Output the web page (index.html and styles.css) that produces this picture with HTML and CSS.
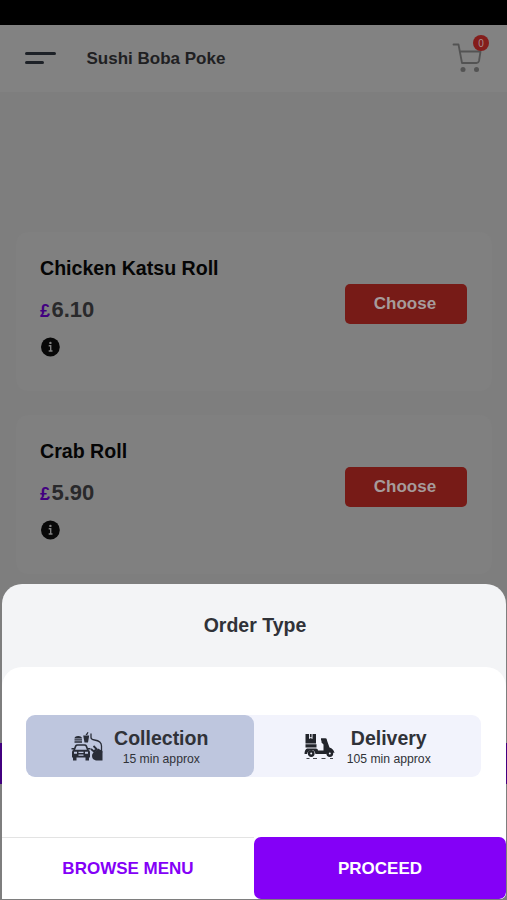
FILE: index.html
```html
<!DOCTYPE html>
<html lang="en">
<head>
<meta charset="utf-8">
<title>Sushi Boba Poke</title>
<link rel="stylesheet" href="styles.css">
</head>
<body>
<div class="phone">
  <div class="status"></div>
  <header class="header">
    <div class="burger"><span></span><span></span></div>
    <h1 class="brand">Sushi Boba Poke</h1>
    <div class="cart">
      <svg width="31" height="31" viewBox="0 0 31 31" fill="none" stroke="#535353" stroke-width="1.8" stroke-linecap="round" stroke-linejoin="round"><path d="M1.500 1.500H6.500L10 20H24.500Q26.500 20 27 18L28.500 8.500H8"/><g fill="#535353" stroke="none"><circle cx="11" cy="26.500" r="2.500"/><circle cx="24.500" cy="26.500" r="2.500"/></g></svg>
      <span class="badge">0</span>
    </div>
  </header>
  <main class="menu">
    <article class="card">
      <div>
        <h2 class="name">Chicken Katsu Roll</h2>
        <p class="price"><span>£</span>6.10</p>
        <svg class="info" width="20" height="20" viewBox="0 0 20 20"><circle cx="10.400" cy="10" r="9.400" fill="#080808"/><path d="M8.700 8.700h2v5M8.700 14h3.800" fill="none" stroke="#808080" stroke-width="1.400"/><circle cx="10.400" cy="5.900" r="1.200" fill="#808080"/></svg>
      </div>
      <button class="choose">Choose</button>
    </article>
    <article class="card">
      <div>
        <h2 class="name">Crab Roll</h2>
        <p class="price"><span>£</span>5.90</p>
        <svg class="info" width="20" height="20" viewBox="0 0 20 20"><circle cx="10.400" cy="10" r="9.400" fill="#080808"/><path d="M8.700 8.700h2v5M8.700 14h3.800" fill="none" stroke="#808080" stroke-width="1.400"/><circle cx="10.400" cy="5.900" r="1.200" fill="#808080"/></svg>
      </div>
      <button class="choose">Choose</button>
    </article>
  </main>
  <div class="basket"></div>
  <section class="sheet">
    <h2 class="title">Order Type</h2>
    <div class="panel">
      <div class="types">
        <div class="type selected">
          <svg width="32" height="32" viewBox="0 0 32 32" fill="#292d38"><path d="M3.500 7.500Q3.500 5 7.200 5T11 7.500ZM3.500 8.200h7.500v1.400H3.500zM3.500 10.300h7.500v1.500H3.500zM12.200 4.500h6l-1.200 7h-3.500zM14.500 4 16.500 1l1 .6-1.300 2.400z"/><path d="M20 2.500V6.500Q20 8.500 23.500 9 30.500 10 30.500 15V22" fill="none" stroke="#292d38" stroke-width="1.300"/><path d="M3 19.500 4.800 14.800Q5.200 14 6.500 14H13.500Q14.800 14 15.200 14.800L17 19.500" fill="none" stroke="#292d38" stroke-width="1.700"/><path fill-rule="evenodd" d="M3 18.700H17Q19 19 19 21V26.500H18V29.500H14.500V26.500H5.500V29.500H2V26.500H1V21Q1 19 3 18.700ZM3 20.700v2h3v-2zM14 20.700v2h3v-2zM7.500 20.700v1.300h5v-1.300zM7.500 23.500v1.300h5v-1.300z"/><path d="M0.500 17h2.500v1.500H.5zM17 17h2.500v1.500H17z"/><path d="M20 18 23 20.500 25.500 18 22.500 15" fill="none" stroke="#292d38" stroke-width="1.800" stroke-linejoin="round"/><path d="M24 20.500 27 17.500 31.500 20V29.500H25Q21 28.500 21 25 21 22 24 20.500Z"/></svg>
          <div class="label"><strong>Collection</strong><small>15 min approx</small></div>
        </div>
        <div class="type">
          <svg width="32" height="32" viewBox="0 0 32 32" fill="#22242b"><path d="M1.500 3H5V8L6.700 7 8.500 8V3H12V12.500H1.500zM5.900 3h1.700v3.200H5.900zM1.500 13.300H12.500V16.500H1.500z"/><path d="M3 17.500H12Q14 17.500 14 19.500H19.500V13.500L17.500 11.500V9.500H17V7.300H21.500Q23 7.300 23 9.500L25.500 16.500Q29.500 17.500 30.500 22L28.500 21.500Q25.500 18 22.500 23H11.500Q10.500 18.500 7 19 3.800 19.500 3 23H.500Q.500 18.500 3 17.500Z"/><g fill="none" stroke="#22242b" stroke-width="2.400"><circle cx="7.200" cy="22.500" r="2.200"/><circle cx="25.800" cy="22.500" r="2.200"/></g><path d="M2.500 27.500h3M9 27.500h4M17.500 27.500h4M26 27.500h3" fill="none" stroke="#44464d" stroke-width="1"/></svg>
          <div class="label"><strong>Delivery</strong><small>105 min approx</small></div>
        </div>
      </div>
    </div>
    <footer class="actions">
      <button class="browse">BROWSE MENU</button>
      <button class="proceed">PROCEED</button>
    </footer>
  </section>
</div>
</body>
</html>
```

FILE: styles.css
```css
* { box-sizing: border-box; }
body { margin: 0; font-family: "Liberation Sans", Arial, sans-serif; color: #303238; }
h1, h2, p { margin: 0; }
button { border: 0; padding: 0; font: inherit; }
svg { display: block; }
.phone { position: relative; width: 507px; height: 900px; overflow: hidden; background: #7e7e7e; }
.status { height: 25px; background: #000; }
.header { height: 67px; display: flex; align-items: center; padding: 0 19px 0 25px; background: #828282; }
.burger { width: 61.5px; display: grid; gap: 6px; position: relative; top: -1px; }
.burger span { width: 31px; height: 3px; border-radius: 2px; background: #1d2127; }
.burger span + span { width: 19px; }
.brand { flex: 1; font-size: 17px; line-height: 22px; color: #202022; }
.cart { position: relative; width: 36px; height: 31px; }
.badge { position: absolute; left: 21px; top: -8px; width: 16px; height: 16px; border-radius: 50%; background: #841d1b; color: #a68e8e; font-size: 10px; line-height: 17px; text-align: center; }
.menu { display: grid; gap: 24px; padding: 140px 15px 0 16px; }
.card { height: 159px; display: flex; justify-content: space-between; padding: 24px 25.5px 0 24px; border-radius: 12px; background: #808080; }
.name { font-size: 19.6px; line-height: 24px; color: #050505; }
.price { margin-top: 17px; font-size: 22px; line-height: 26px; font-weight: bold; color: #29292b; }
.price span { font-size: 18px; color: #420080; margin-right: 1.5px; }
.info { margin-top: 13px; }
.choose { width: 122px; height: 39.5px; margin-top: 28px; padding: 1px 1px 0 0; border-radius: 5px; background: #771b17; color: #a69b9b; font-size: 17px; font-weight: bold; }
.basket { position: absolute; left: 0; top: 743px; width: 507px; height: 41px; background: #42007f; }
.sheet { position: absolute; left: 2px; top: 584px; width: 504px; height: 315px; display: flex; flex-direction: column; border-radius: 20px 20px 6px 0; background: #f3f4f6; overflow: hidden; }
.title { height: 83px; line-height: 82px; text-align: center; font-size: 19.5px; padding-left: 2px; }
.panel { height: 170px; padding: 48px 25px 0 24px; border-radius: 20px 20px 0 0; background: #fff; }
.types { height: 62px; display: flex; border-radius: 9px; background: #f2f3fc; }
.type { flex: 1; display: flex; justify-content: center; align-items: center; gap: 11px; padding: 2px 0 0 0; }
.type.selected { border-radius: 9px; background: #bec6de; }
.label { display: grid; justify-items: center; }
.label strong { font-size: 19.5px; line-height: 23px; }
.label small { font-size: 12.2px; line-height: 18px; }
.actions { flex: 1; display: flex; background: #fff; }
.actions button { flex: 1; font-size: 17px; font-weight: bold; padding-top: 1px; }
.browse { background: #fff; color: #8400f7; border-top: 1px solid #e3e3e3; }
.proceed { background: #8400f7; color: #fff; border-radius: 7px; }
```
